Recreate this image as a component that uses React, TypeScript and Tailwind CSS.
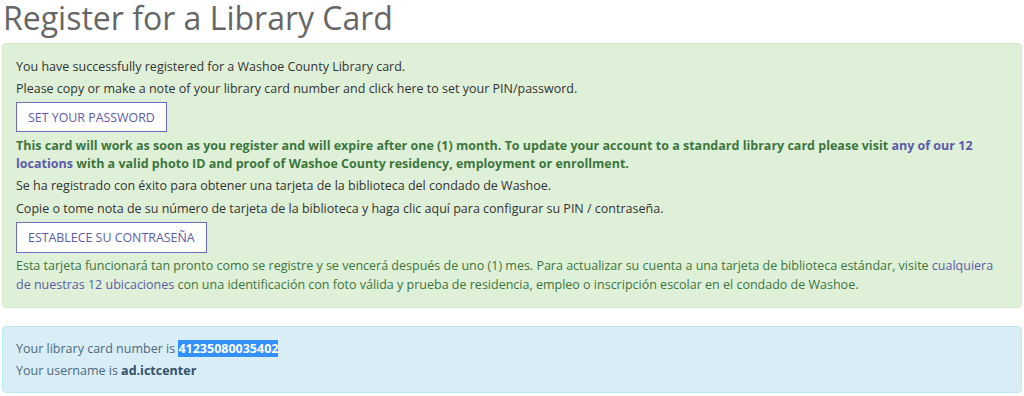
import React from "react";

const App = () => {
  return (
    <div className="w-[1024px] h-[396px] overflow-hidden bg-white px-[2px] font-['Open_Sans',sans-serif]">
      <h1 className="text-[32px] leading-[36px] text-[#666] font-normal pl-px">
        Register for a Library Card
      </h1>
      <div className="mt-[7px] rounded border border-[#d6e9c6] bg-[#dff0d8] px-[13px] pt-[13px] pb-[13px] text-[12.5px] leading-[19px]">
        <p className="text-[#333] mb-[3px]">You have successfully registered for a Washoe County Library card.</p>
        <p className="text-[#333]">Please copy or make a note of your library card number and click here to set your PIN/password.</p>
        <button className="mt-[4px] mb-[5px] h-[30px] px-[11px] bg-white border border-[#6b6bc4] text-[#5b5ba8] text-[12.4px] uppercase">
          Set your password
        </button>
        <p className="font-bold text-[#3c763d] leading-[18px]">
          This card will work as soon as you register and will expire after one (1) month. To update your account to a standard library card please visit{" "}
          <a className="text-[#5b5ba8]">any of our 12 locations</a> with a valid photo ID and proof of Washoe County residency, employment or enrollment.
        </p>
        <p className="text-[#333] mt-[3px] mb-[4px]">Se ha registrado con éxito para obtener una tarjeta de la biblioteca del condado de Washoe.</p>
        <p className="text-[#333]">Copie o tome nota de su número de tarjeta de la biblioteca y haga clic aquí para configurar su PIN / contraseña.</p>
        <button className="mt-[4px] mb-[3px] h-[31px] px-[11px] bg-white border border-[#6b6bc4] text-[#5b5ba8] text-[12.4px] uppercase">
          Establece su contraseña
        </button>
        <p className="text-[#3c763d]">
          Esta tarjeta funcionará tan pronto como se registre y se vencerá después de uno (1) mes. Para actualizar su cuenta a una tarjeta de biblioteca estándar, visite{" "}
          <a className="text-[#5b5ba8]">cualquiera de nuestras 12 ubicaciones</a> con una identificación con foto válida y prueba de residencia, empleo o inscripción escolar en el condado de Washoe.
        </p>
      </div>
      <div className="mt-[18px] rounded border border-[#bce8f1] bg-[#d9edf7] px-[13px] pt-[12px] pb-[12px] text-[12.5px] leading-[19px] text-[#4a6a7d]">
        <p className="mb-[3px]">
          Your library card number is <span className="font-bold bg-[#3390ff] text-white">41235080035402</span>
        </p>
        <p>
          Your username is <span className="font-bold text-[#31506b]">ad.ictcenter</span>
        </p>
      </div>
    </div>
  );
};

export default App;
